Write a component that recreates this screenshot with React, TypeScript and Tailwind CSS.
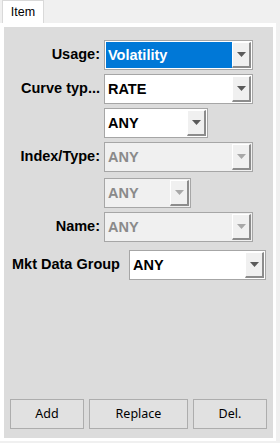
import React from 'react';

const font = { fontFamily: '"Liberation Sans", Arial, sans-serif' };

type ComboProps = {
  value: string;
  width: string;
  disabled?: boolean;
  selected?: boolean;
};

function Combo({ value, width, disabled, selected }: ComboProps) {
  return (
    <div
      className={`flex h-[30px] border border-[#a6a6a6] p-px ${width} ${
        disabled ? 'bg-[#f0f0f0]' : 'bg-white'
      }`}
    >
      <div
        className={`flex-1 flex items-center pl-[2px] text-[14.5px] font-bold leading-none ${
          selected ? 'bg-[#0078d7] text-white' : disabled ? 'text-[#8a8a8a]' : 'text-black'
        }`}
      >
        {value}
      </div>
      <div className="w-[19px] flex items-center justify-center bg-[#f0f0f0] border-t border-l border-white border-r-2 border-b-2 border-r-[#8c8c8c] border-b-[#8c8c8c]">
        <svg width="9" height="5" viewBox="0 0 9 5">
          <polygon points="0,0 9,0 4.5,5" fill={disabled ? '#a8a8a8' : '#5a5a5a'} />
        </svg>
      </div>
    </div>
  );
}

function Row({ label, children, className = '' }: { label: string; children: React.ReactNode; className?: string }) {
  return (
    <div className={`flex items-center ${className}`}>
      <div className="w-[100px] pr-[4px] text-right text-[14.5px] font-bold text-black whitespace-nowrap">{label}</div>
      {children}
    </div>
  );
}

export default function App() {
  return (
    <div className="w-[280px] h-[443px] bg-[#f0f0f0] overflow-hidden" style={font}>
      {/* Tab strip */}
      <div className="flex h-[23px] items-end">
        <div className="ml-[2px] w-[42px] h-[23px] bg-white border-l border-t border-r border-[#d9d9d9] flex items-center justify-center text-[12.5px] text-black">
          Item
        </div>
      </div>

      {/* Panel */}
      <div className="w-[276px] h-[418px] bg-white pt-[4px] pl-[4px] pr-[3px] pb-[3px]">
        <div className="h-full bg-[#dcdcdc] flex flex-col pt-[13px] pb-[9px]">
          <Row label="Usage:">
            <Combo value="Volatility" width="w-[149px]" selected />
          </Row>
          <Row label="Curve typ..." className="mt-[4px]">
            <Combo value="RATE" width="w-[149px]" />
          </Row>
          <Row label="" className="mt-[4px]">
            <Combo value="ANY" width="w-[104px]" />
          </Row>
          <Row label="Index/Type:" className="mt-[4px]">
            <Combo value="ANY" width="w-[149px]" disabled />
          </Row>
          <Row label="" className="mt-[6px]">
            <Combo value="ANY" width="w-[87px]" disabled />
          </Row>
          <Row label="Name:" className="mt-[4px]">
            <Combo value="ANY" width="w-[149px]" disabled />
          </Row>
          <div className="flex items-center mt-[8px] pl-[8px]">
            <div className="w-[117px] text-[14.5px] font-bold text-black whitespace-nowrap">Mkt Data Group</div>
            <Combo value="ANY" width="w-[137px]" />
          </div>

          {/* Buttons */}
          <div className="mt-auto flex pl-[6px] gap-[5px]" style={{ fontFamily: '"Noto Sans", "DejaVu Sans", sans-serif' }}>
            {['Add', 'Replace', 'Del.'].map((b, i) => (
              <button
                key={b}
                className={`h-[30px] bg-[#e1e1e1] border border-[#adadad] text-[12.5px] text-black ${
                  i === 1 ? 'w-[99px]' : 'w-[74px]'
                }`}
              >
                {b}
              </button>
            ))}
          </div>
        </div>
      </div>
    </div>
  );
}
